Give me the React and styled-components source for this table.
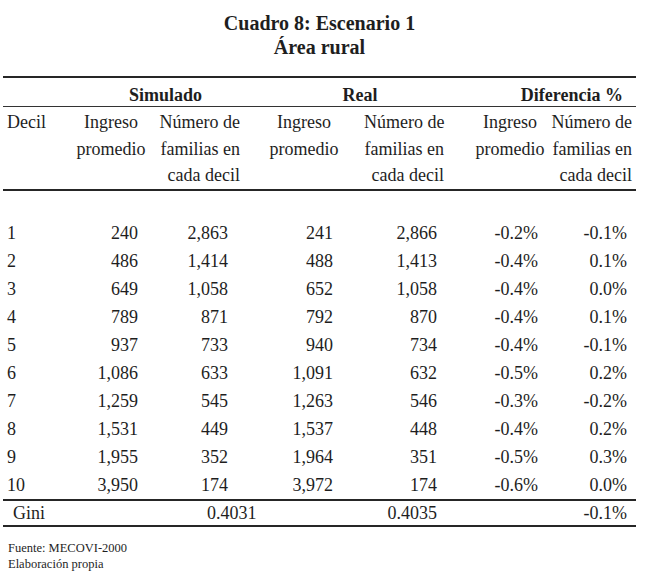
import React from "react";
import styled, { createGlobalStyle } from "styled-components";

const GlobalStyle = createGlobalStyle`
  body {
    margin: 0;
    background: #ffffff;
    color: #1e1e1e;
    font-family: "Liberation Serif", "Times New Roman", serif;
  }
`;

const COLS = "69px 78px 94px 120px 84px 101px 87px";

const Page = styled.div`
  width: 650px;
  padding: 11px 0 0 3px;
  box-sizing: border-box;
`;

const Title = styled.h1`
  width: 633px;
  margin: 0 0 17px;
  font-size: 20px;
  line-height: 24px;
  font-weight: bold;
  text-align: center;
`;

const Table = styled.div`
  width: 633px;
  border-top: 2px solid #262626;
  font-size: 18px;
`;

const Row = styled.div`
  display: grid;
  grid-template-columns: ${COLS};
  white-space: nowrap;
`;

const GroupRow = styled(Row)`
  line-height: 18px;
  padding: 8px 0 2px;
  border-bottom: 1px solid #333;
  font-weight: bold;
`;

const HeadRow = styled(Row)`
  line-height: 26.5px;
  padding-top: 2px;
  border-bottom: 2px solid #262626;
`;

const Body = styled.div`
  padding-top: 28px;
  border-bottom: 2px solid #262626;
`;

const DataRow = styled(Row)`
  line-height: 28px;
`;

const GiniRow = styled(Row)`
  line-height: 24px;
  border-bottom: 2px solid #262626;
`;

const Cell = styled.div`
  grid-column: ${({ $span }) => $span || "auto"};
  text-align: ${({ $align }) => $align || "right"};
  padding-left: ${({ $pl }) => $pl || 0}px;
  padding-right: ${({ $pr }) => $pr || 0}px;
`;

const Footer = styled.div`
  margin-top: 13px;
  padding-left: 5px;
  font-size: 12.5px;
  line-height: 16px;
`;

// padding-right of the numbers in each column
const dataPad = [0, 12, 16, 31, 11, 11, 9];

const rows = [
  ["1", "240", "2,863", "241", "2,866", "-0.2%", "-0.1%"],
  ["2", "486", "1,414", "488", "1,413", "-0.4%", "0.1%"],
  ["3", "649", "1,058", "652", "1,058", "-0.4%", "0.0%"],
  ["4", "789", "871", "792", "870", "-0.4%", "0.1%"],
  ["5", "937", "733", "940", "734", "-0.4%", "-0.1%"],
  ["6", "1,086", "633", "1,091", "632", "-0.5%", "0.2%"],
  ["7", "1,259", "545", "1,263", "546", "-0.3%", "-0.2%"],
  ["8", "1,531", "449", "1,537", "448", "-0.4%", "0.2%"],
  ["9", "1,955", "352", "1,964", "351", "-0.5%", "0.3%"],
  ["10", "3,950", "174", "3,972", "174", "-0.6%", "0.0%"],
];

const Lines = ({ items }) =>
  items.map((t, i) => (
    <React.Fragment key={i}>
      {t}
      {i < items.length - 1 && <br />}
    </React.Fragment>
  ));

export default function App() {
  return (
    <Page>
      <GlobalStyle />
      <Title>
        Cuadro 8: Escenario 1
        <br />
        Área rural
      </Title>

      <Table>
        <GroupRow>
          <Cell />
          <Cell $span="2 / 4" $align="center" $pl={15}>Simulado</Cell>
          <Cell $span="4 / 6" $align="center" $pl={28}>Real</Cell>
          <Cell $span="6 / 8" $pr={13}>Diferencia %</Cell>
        </GroupRow>

        <HeadRow>
          <Cell $align="left" $pl={4}>Decil</Cell>
          <Cell $align="center"><Lines items={["Ingreso", "promedio"]} /></Cell>
          <Cell $pr={4}><Lines items={["Número de", "familias en", "cada decil"]} /></Cell>
          <Cell $align="center"><Lines items={["Ingreso", "promedio"]} /></Cell>
          <Cell $pr={4}><Lines items={["Número de", "familias en", "cada decil"]} /></Cell>
          <Cell $align="center" $pl={23}><Lines items={["Ingreso", "promedio"]} /></Cell>
          <Cell $pr={4}><Lines items={["Número de", "familias en", "cada decil"]} /></Cell>
        </HeadRow>

        <Body>
          {rows.map((r) => (
            <DataRow key={r[0]}>
              {r.map((v, i) =>
                i === 0 ? (
                  <Cell key={i} $align="left" $pl={4}>{v}</Cell>
                ) : (
                  <Cell key={i} $pr={dataPad[i]}>{v}</Cell>
                )
              )}
            </DataRow>
          ))}
        </Body>

        <GiniRow>
          <Cell $align="left" $pl={10}>Gini</Cell>
          <Cell />
          <Cell $align="left" $pl={57}>0.4031</Cell>
          <Cell />
          <Cell $pr={dataPad[4]}>0.4035</Cell>
          <Cell />
          <Cell $pr={dataPad[6]}>-0.1%</Cell>
        </GiniRow>
      </Table>

      <Footer>
        Fuente: MECOVI-2000
        <br />
        Elaboración propia
      </Footer>
    </Page>
  );
}
